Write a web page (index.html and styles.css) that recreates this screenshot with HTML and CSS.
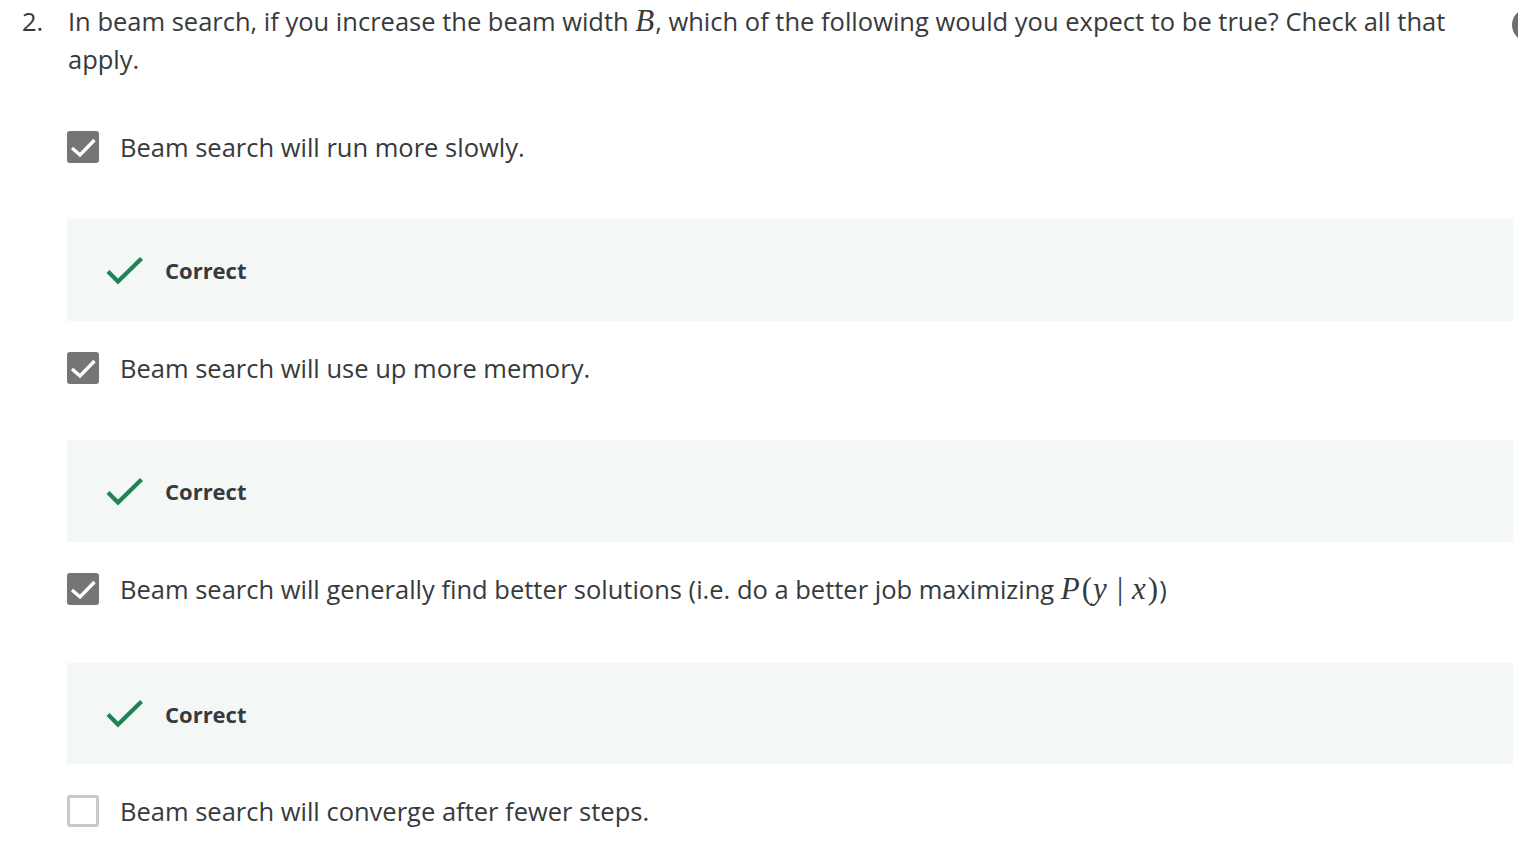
FILE: index.html
```html
<!DOCTYPE html>
<html lang="en">
<head>
<meta charset="utf-8">
<title>Quiz question</title>
<link rel="stylesheet" href="styles.css">
</head>
<body>
<div class="page">
  <span class="corner-dot"></span>
  <div class="question">
    <div class="q-num">2.</div>
    <div class="q-body">
      <div class="q-text">In beam search, if you increase the beam width <span class="math"><i class="mi">B</i></span>, which of the following would you expect to be true? Check all that apply.</div>

      <div class="option">
        <span class="box box--checked"><svg viewBox="0 0 32 32" width="32" height="32"><path d="M5 17 L13 24 L27.5 9" fill="none" stroke="#fff" stroke-width="3.4"/></svg></span>
        <span class="opt-text">Beam search will run more slowly.</span>
      </div>
      <div class="feedback">
        <svg class="fb-icon" viewBox="0 0 38 30" width="38" height="30"><path d="M2 15.5 L12 25.5 L35.5 2.5" fill="none" stroke="#1f8354" stroke-width="4.2"/></svg>
        <span class="fb-text">Correct</span>
      </div>

      <div class="option">
        <span class="box box--checked"><svg viewBox="0 0 32 32" width="32" height="32"><path d="M5 17 L13 24 L27.5 9" fill="none" stroke="#fff" stroke-width="3.4"/></svg></span>
        <span class="opt-text">Beam search will use up more memory.</span>
      </div>
      <div class="feedback">
        <svg class="fb-icon" viewBox="0 0 38 30" width="38" height="30"><path d="M2 15.5 L12 25.5 L35.5 2.5" fill="none" stroke="#1f8354" stroke-width="4.2"/></svg>
        <span class="fb-text">Correct</span>
      </div>

      <div class="option option--math">
        <span class="box box--checked"><svg viewBox="0 0 32 32" width="32" height="32"><path d="M5 17 L13 24 L27.5 9" fill="none" stroke="#fff" stroke-width="3.4"/></svg></span>
        <span class="opt-text">Beam search will generally find better solutions (i.e. do a better job maximizing <span class="math"><i class="mi">P</i><span class="mo">(</span><i class="mi">y</i><span class="mbar">|</span><i class="mi">x</i><span class="mo">)</span></span>)</span>
      </div>
      <div class="feedback feedback--after-math">
        <svg class="fb-icon" viewBox="0 0 38 30" width="38" height="30"><path d="M2 15.5 L12 25.5 L35.5 2.5" fill="none" stroke="#1f8354" stroke-width="4.2"/></svg>
        <span class="fb-text">Correct</span>
      </div>

      <div class="option">
        <span class="box box--empty"></span>
        <span class="opt-text">Beam search will converge after fewer steps.</span>
      </div>
    </div>
  </div>
</div>
</body>
</html>
```

FILE: styles.css
```css
html, body {
  margin: 0;
  padding: 0;
  background: #ffffff;
}

body {
  font-family: "Open Sans", "Noto Sans", sans-serif;
  color: #373a3c;
  font-size: 25.5px;
  line-height: 38px;
  overflow: hidden;
}

.page {
  position: relative;
  width: 1518px;
  height: 848px;
  overflow: hidden;
}

.corner-dot {
  position: absolute;
  left: 1512px;
  top: 8px;
  width: 34px;
  height: 34px;
  border-radius: 50%;
  background: #707070;
}

.question {
  display: flex;
  padding-top: 2px;
}

.q-num {
  width: 46px;
  padding-left: 22px;
  flex: none;
}

.q-body {
  width: 1446px;
  flex: none;
  margin-left: -1px;
}

.q-text {
  padding-left: 1px;
  margin-bottom: 50px;
}

.math {
  font-family: "Liberation Serif", "DejaVu Serif", serif;
  line-height: 1;
}

.mi {
  font-style: italic;
  font-family: "Liberation Serif", "DejaVu Serif", serif;
  font-size: 31px;
  line-height: 1;
  padding-right: 1px;
}

.mo {
  font-family: "Liberation Serif", serif;
  font-size: 31px;
  line-height: 1;
  padding: 0 1px;
}

.mbar {
  font-family: "Liberation Serif", serif;
  font-size: 31px;
  line-height: 1;
  padding: 0 9px;
}

.option {
  display: flex;
  align-items: center;
  height: 38px;
  gap: 21px;
}

.box {
  flex: none;
  width: 32px;
  height: 32px;
  box-sizing: border-box;
  border-radius: 3px;
  display: block;
}

.box svg {
  display: block;
}

.box--checked {
  background: #757575;
}

.box--empty {
  border: 3px solid #c9c9c9;
  background: #ffffff;
}

.opt-text {
  white-space: nowrap;
}

.feedback {
  display: flex;
  align-items: center;
  height: 102px;
  margin: 53px 0 28px;
  padding-left: 39px;
  background: #f3f8f7;
  box-sizing: border-box;
}

.feedback--after-math {
  margin-top: 55px;
  height: 101px;
}

.fb-icon {
  display: block;
  flex: none;
  margin-top: 1px;
}

.fb-text {
  margin-left: 21px;
  font-size: 22px;
  font-weight: 700;
  line-height: 28px;
  color: #373a3c;
}
```
